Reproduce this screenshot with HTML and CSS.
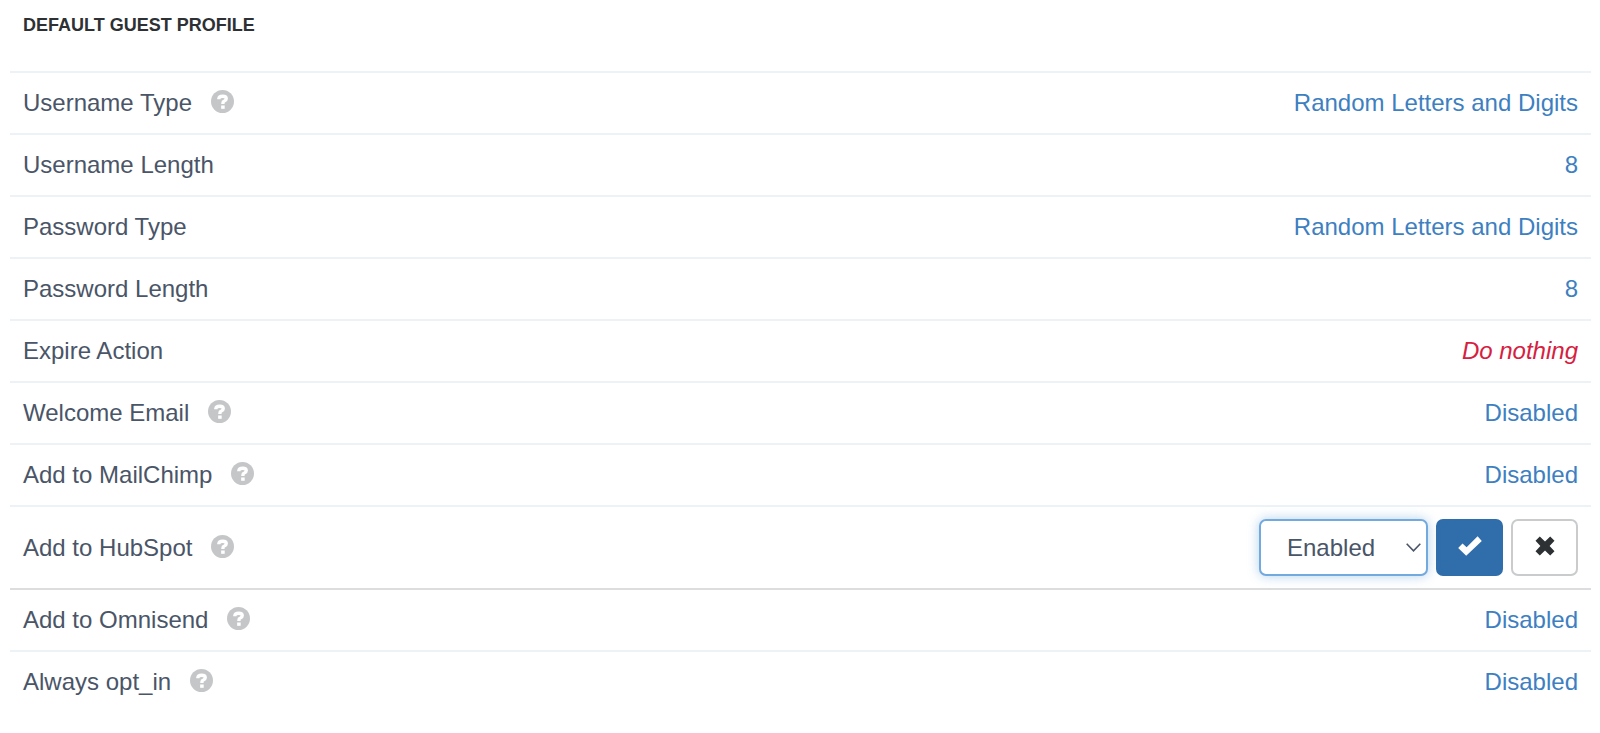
FILE: index.html
```html
<!DOCTYPE html>
<html lang="en">

<head>
    <meta charset="UTF-8">
    <meta name="viewport" content="width=device-width, initial-scale=1.0">
    <title>Default Guest Profile</title>
    <link rel="stylesheet" href="styles.css">
</head>

<body>
    <!-- icon shapes -->
    <svg width="0" height="0" class="sprite">
        <symbol id="question" viewBox="0 0 22 22">
            <circle cx="11" cy="11" r="11" fill="#c4c6c8" />
            <path d="M7.5 8.8V8.2Q7.7 6 11.2 6Q14.6 6 14.6 8.4Q14.6 9.8 12.8 10.5Q11.4 11 11.4 12.4V13.4" fill="none" stroke="#fff" stroke-width="3.2" />
            <path d="M9.7 14.8h3.4v3.2h-3.4z" fill="#fff" />
        </symbol>
        <symbol id="check" viewBox="0 0 24 20">
            <path d="M19.6 0.2L23.8 5L8.2 19.8L0.2 12L4.5 7.5L8.6 11.3Z" fill="currentColor" />
        </symbol>
        <symbol id="times" viewBox="0 0 20 20">
            <path d="M4.8 0.5L10 5.4L15.2 0.5L19.5 4.8L14.6 10L19.5 15.2L15.2 19.5L10 14.6L4.8 19.5L0.5 15.2L5.4 10L0.5 4.8Z" fill="currentColor" />
        </symbol>
    </svg>

    <div class="panel">
        <h2>DEFAULT GUEST PROFILE</h2>
        <table class="profile">
            <tr>
                <th scope="row">Username Type <svg class="help"><use href="#question" /></svg></th>
                <td><a href="#">Random Letters and Digits</a></td>
            </tr>
            <tr>
                <th scope="row">Username Length</th>
                <td><a href="#">8</a></td>
            </tr>
            <tr>
                <th scope="row">Password Type</th>
                <td><a href="#">Random Letters and Digits</a></td>
            </tr>
            <tr>
                <th scope="row">Password Length</th>
                <td><a href="#">8</a></td>
            </tr>
            <tr>
                <th scope="row">Expire Action</th>
                <td><a href="#" class="empty">Do nothing</a></td>
            </tr>
            <tr>
                <th scope="row">Welcome Email <svg class="help"><use href="#question" /></svg></th>
                <td><a href="#">Disabled</a></td>
            </tr>
            <tr>
                <th scope="row">Add to MailChimp <svg class="help"><use href="#question" /></svg></th>
                <td><a href="#">Disabled</a></td>
            </tr>
            <tr class="editing">
                <th scope="row"><label for="hubspot">Add to HubSpot</label> <svg class="help"><use href="#question" /></svg></th>
                <td>
                    <form class="edit">
                        <div class="select">
                            <select id="hubspot">
                                <option>Disabled</option>
                                <option selected>Enabled</option>
                            </select>
                            <svg class="arrow" viewBox="0 0 15 9"><path d="M0.7 0.7L7.5 7.8L14.3 0.7" fill="none" stroke="#4a5568" stroke-width="1.6" /></svg>
                        </div>
                        <button type="submit" class="btn save" aria-label="Save"><svg width="24" height="20"><use href="#check" /></svg></button>
                        <button type="button" class="btn cancel" aria-label="Cancel"><svg width="20" height="20"><use href="#times" /></svg></button>
                    </form>
                </td>
            </tr>
            <tr>
                <th scope="row">Add to Omnisend <svg class="help"><use href="#question" /></svg></th>
                <td><a href="#">Disabled</a></td>
            </tr>
            <tr>
                <th scope="row">Always opt_in <svg class="help"><use href="#question" /></svg></th>
                <td><a href="#">Disabled</a></td>
            </tr>
        </table>
    </div>
</body>

</html>
```
FILE: styles.css
```css
* {
    margin: 0;
    padding: 0;
    box-sizing: border-box;
}

body {
    background-color: #fff;
    color: #4a5568;
    font-family: "Liberation Sans", Arial, sans-serif;
    font-size: 24px;
    line-height: 32px;
}

.sprite {
    position: absolute;
}

.panel {
    padding: 0 9px 0 10px;
}

h2 {
    padding: 14px 13px 35px;
    color: #2d3133;
    font-size: 18px;
    line-height: 22px;
}

.profile {
    width: 100%;
    border-collapse: separate;
    border-spacing: 0;
}

.profile th,
.profile td {
    padding: 14px 13px;
    border-top: 2px solid #edf2f7;
    vertical-align: middle;
}

.profile th {
    font-weight: normal;
    text-align: left;
}

.profile td {
    text-align: right;
}

/* the row under the open editor gets a darker line */
.profile .editing + tr th,
.profile .editing + tr td {
    border-top-color: #dcdddf;
}

.profile .editing th,
.profile .editing td {
    padding-top: 12px;
    padding-bottom: 12px;
}

a {
    color: #3d7fc1;
    text-decoration: none;
}

.empty {
    color: #d6203f;
    font-style: italic;
}

.help {
    width: 23px;
    height: 23px;
    margin-left: 12px;
    vertical-align: -2px;
}

.edit {
    display: flex;
    justify-content: flex-end;
    gap: 8px;
}

.select {
    position: relative;
    width: 169px;
}

select {
    display: block;
    width: 100%;
    height: 57px;
    padding: 0 26px;
    appearance: none;
    background-color: #fff;
    border: 2px solid #72a9df;
    border-radius: 7px;
    box-shadow: 0 0 12px rgba(66, 140, 205, .4);
    color: #4a5568;
    font: inherit;
    outline: none;
}

.arrow {
    position: absolute;
    top: 24px;
    right: 7px;
    width: 15px;
    height: 9px;
    pointer-events: none;
}

.btn {
    display: flex;
    align-items: center;
    justify-content: center;
    width: 67px;
    height: 57px;
    padding-bottom: 3px;
    border: 2px solid #c9cbcd;
    border-radius: 7px;
    background-color: #fff;
    color: #2d3133;
}

.save {
    border-color: #306dab;
    background-color: #306dab;
    color: #fff;
}
```
